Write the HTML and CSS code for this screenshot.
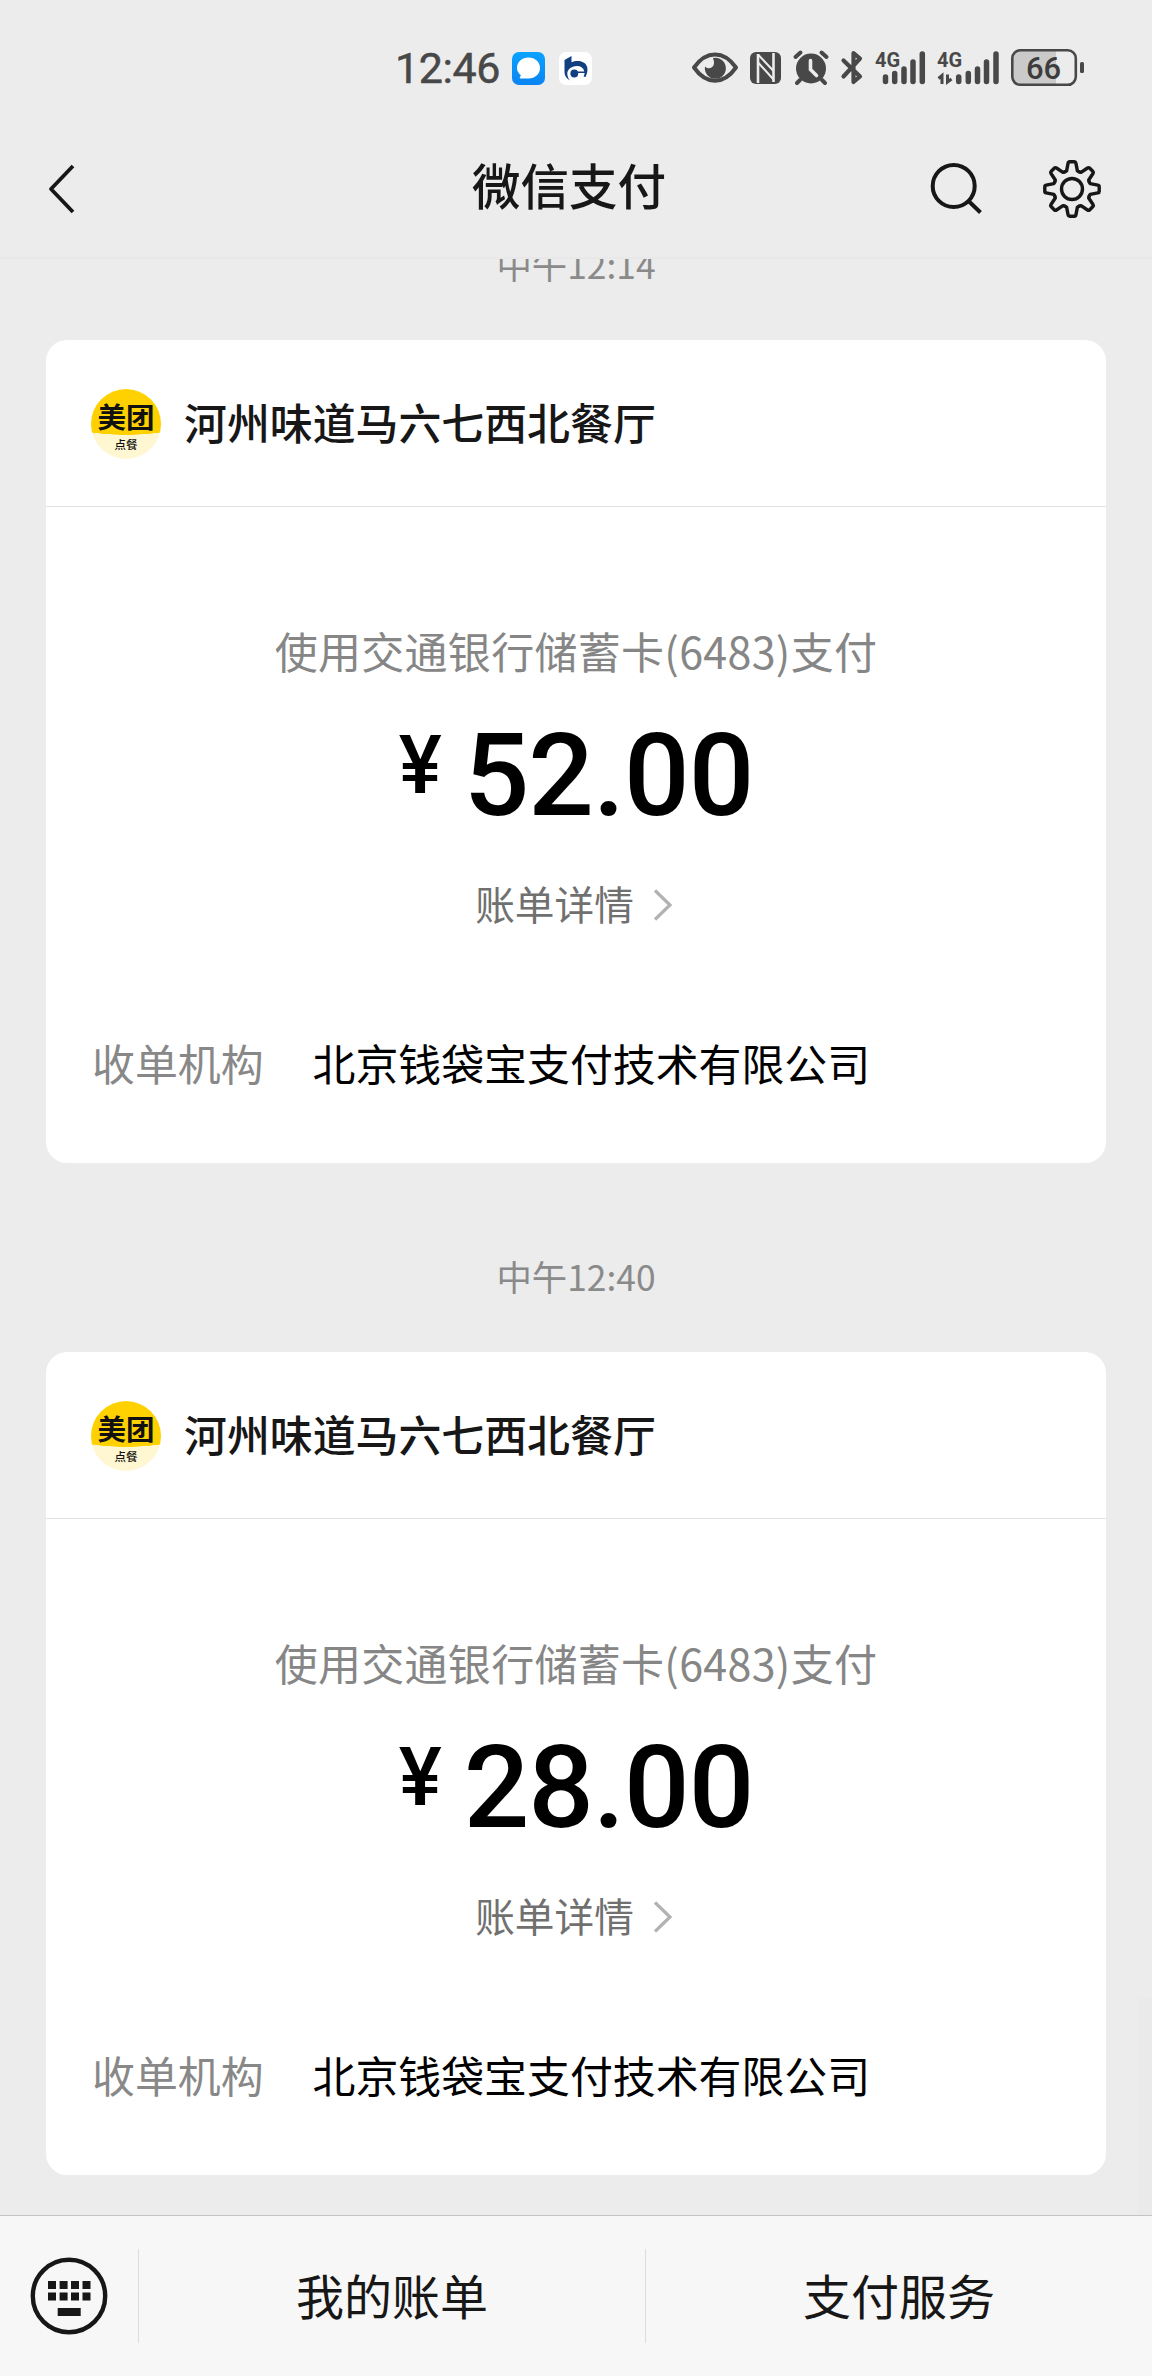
FILE: index.html
```html
<!DOCTYPE html>
<html lang="zh-CN">
<head>
<meta charset="utf-8">
<title>微信支付</title>
<link rel="stylesheet" href="styles.css">
</head>
<body>
<div class="screen">
  <div class="status-bar">
    <span class="clock">12:46</span>
    <svg class="app-icon" width="33" height="33" viewBox="0 0 33 33">
      <defs><linearGradient id="msg" x1="0" y1="0" x2="0" y2="1"><stop offset="0" stop-color="#0aa2ff"/><stop offset="1" stop-color="#0b84f3"/></linearGradient></defs>
      <rect width="33" height="33" rx="7" fill="url(#msg)"/>
      <path d="M16.500 5.500C23 5.500 28 10 28 16s-5 10.500-11.500 10.500H8.500c-.8 0-1-.6-.6-1.200l1-2C6.500 21.500 5 19 5 16 5 10 10 5.500 16.500 5.500z" fill="#fff"/>
    </svg>
    <svg class="app-icon" width="33" height="33" viewBox="0 0 33 33">
      <rect width="33" height="33" rx="7" fill="#fff"/>
      <path d="M5.500 8L12.500 4v6.200C16 8.500 22 8.200 25.500 11c3.800 3 3.800 8.500 1 14l-2-.5c.7-1.200 1-2 1.100-3.500H17v-1.600h8.300C24.500 16 22 14 18 14c-6 0-10 4-9.700 8 .2 2.500 1 4.500 2.700 6.500-3.800-2-5.500-5-5.500-8.500z" fill="#123f80"/>
      <circle cx="15.300" cy="21.500" r="3.900" fill="#123f80"/>
    </svg>
    <svg class="system-icons" width="396" height="40" viewBox="690 48 396 40">
      <path d="M694 67.500C700 59 707 54.500 715 54.500S730 59 736 67.500C730 76 723 80.700 715 80.700S700 76 694 67.500z" fill="none" stroke="#484848" stroke-width="4" stroke-linejoin="round"/>
      <path d="M713 58a10.500 10.500 0 1 1-8 8.500c3 3.500 8.500 1.500 9-3 .1-2-.3-3.500-1-5.500z" fill="#484848"/>
      <rect x="750" y="52" width="31" height="32" rx="6" fill="#484848"/>
      <path d="M758 54v29M773.500 53v29" stroke="#ececec" stroke-width="2.600" fill="none"/>
      <path d="M758 54.500L773.500 71M758.500 63l15 16.500" stroke="#ececec" stroke-width="2"/>
      <path d="M795.500 57l5-4.500M826.500 57l-5-4.500M800 80l-3 3M822 80l3 3" stroke="#484848" stroke-width="4" stroke-linecap="round"/>
      <circle cx="811" cy="68.500" r="15" fill="#484848"/>
      <path d="M810.500 60.500v9l6 6" fill="none" stroke="#ececec" stroke-width="3.600" stroke-linecap="round"/>
      <path d="M843.500 60.500L860 76.500 853.500 82V53l6.500 5.500L843.500 76.500" fill="none" stroke="#484848" stroke-width="4.200" stroke-linejoin="round" stroke-linecap="round"/>
      <g class="net-label"><text x="875" y="67">4G</text><text x="937" y="67">4G</text></g>
      <g stroke="#484848" stroke-width="5.500" stroke-linecap="round">
        <path d="M885.500 77v4.500M894.700 73.500v8M904 69v12.500M913 62v19.500M922.300 54v27.500"/>
        <path d="M958.700 77v4.500M968.300 73.500v8M977.500 69v12.500M986.500 62v19.500M996 54v27.500"/>
      </g>
      <path d="M938.500 78.500l3.500-3V84M947.500 74.500V82l4-3" fill="none" stroke="#484848" stroke-width="3"/>
      <path d="M1019 51h37v33h-37a6 6 0 0 1-6-6V57a6 6 0 0 1 6-6z" fill="#cacaca"/>
      <rect x="1012.300" y="50.300" width="63.500" height="34.500" rx="8" fill="none" stroke="#484848" stroke-width="2.600"/>
      <rect x="1080" y="62" width="4" height="11" rx="1.500" fill="#484848"/>
      <text x="1043.500" y="79" class="battery-level">66</text>
    </svg>
  </div>

  <header class="nav">
    <svg width="60" height="60" viewBox="0 0 60 60"><path d="M43 7L21 30l22 23" fill="none" stroke="#171717" stroke-width="3.800" stroke-linejoin="round"/></svg>
    <h1 class="nav-title">微信支付</h1>
    <div class="nav-actions">
      <svg width="60" height="60" viewBox="0 0 60 60" fill="none" stroke="#171717" stroke-width="4"><circle cx="27.700" cy="27" r="21"/><path d="M42.500 42L54.500 53.500"/></svg>
      <svg width="60" height="60" viewBox="-30 -30 60 60" fill="none" stroke="#171717" stroke-width="3.400" stroke-linejoin="round" stroke-linecap="round">
        <defs><path id="tooth" d="M-7.100-17.200L-5.400-18.200-3.900-25.800Q-3.600-27.200-2.400-27.200H2.400Q3.600-27.200 3.900-25.800L5.400-18.200 7.100-17.200"/></defs>
        <use href="#tooth"/><use href="#tooth" transform="rotate(45)"/><use href="#tooth" transform="rotate(90)"/><use href="#tooth" transform="rotate(135)"/><use href="#tooth" transform="rotate(180)"/><use href="#tooth" transform="rotate(225)"/><use href="#tooth" transform="rotate(270)"/><use href="#tooth" transform="rotate(315)"/>
        <circle r="10.500"/>
      </svg>
    </div>
  </header>

  <main class="messages">
    <time class="stamp">中午12:14</time>
    <article class="card">
      <div class="merchant">
        <div class="avatar"><span class="avatar-brand">美团</span><span class="avatar-sub">点餐</span></div>
        <h2 class="merchant-name">河州味道马六七西北餐厅</h2>
      </div>
      <div class="payment">
        <p class="method">使用交通银行储蓄卡(6483)支付</p>
        <p class="amount"><span class="currency">¥</span><span class="value">52.00</span></p>
        <a class="detail">账单详情<svg width="22" height="36" viewBox="0 0 22 36"><path d="M3 3.500L18 18 3 32.500" fill="none" stroke="#b2b2b2" stroke-width="3.200"/></svg></a>
        <dl class="acquirer"><dt>收单机构</dt><dd>北京钱袋宝支付技术有限公司</dd></dl>
      </div>
    </article>
    <time class="stamp">中午12:40</time>
    <article class="card">
      <div class="merchant">
        <div class="avatar"><span class="avatar-brand">美团</span><span class="avatar-sub">点餐</span></div>
        <h2 class="merchant-name">河州味道马六七西北餐厅</h2>
      </div>
      <div class="payment">
        <p class="method">使用交通银行储蓄卡(6483)支付</p>
        <p class="amount"><span class="currency">¥</span><span class="value">28.00</span></p>
        <a class="detail">账单详情<svg width="22" height="36" viewBox="0 0 22 36"><path d="M3 3.500L18 18 3 32.500" fill="none" stroke="#b2b2b2" stroke-width="3.200"/></svg></a>
        <dl class="acquirer"><dt>收单机构</dt><dd>北京钱袋宝支付技术有限公司</dd></dl>
      </div>
    </article>
    <div class="scroll-track"></div>
  </main>

  <footer class="menu">
    <div class="menu-keyboard">
      <svg width="78" height="78" viewBox="0 0 78 78"><circle cx="39" cy="39" r="36.200" fill="none" stroke="#171717" stroke-width="4.400"/>
      <path fill="#171717" d="M18 24h8v8h-8zM29.600 24h8v8h-8zM41 24h8v8h-8zM52.500 24h8v8h-8zM18 35.500h8v8h-8zM29.600 35.500h8v8h-8zM41 35.500h8v8h-8zM52.500 35.500h8v8h-8zM27.700 51h23v8h-23z"/></svg>
    </div>
    <div class="menu-item">我的账单</div>
    <div class="menu-item">支付服务</div>
  </footer>
</div>
</body>
</html>
```
FILE: styles.css
```css
* { box-sizing: border-box; margin: 0; padding: 0; }

body {
  font-family: "Noto Sans CJK SC", sans-serif;
  color: #171717;
  background: #ececec;
}

.screen {
  width: 1152px;
  height: 2376px;
  display: flex;
  flex-direction: column;
  overflow: hidden;
}

.status-bar {
  flex: none;
  height: 122px;
  padding: 48px 66px 0 395px;
  display: flex;
  align-items: flex-start;
}
.clock {
  width: 117px;
  margin-top: -5px;
  font: 400 43px/50px Roboto, sans-serif;
  letter-spacing: -0.4px;
  color: #484848;
  -webkit-text-stroke: 0.5px #484848;
}
.app-icon { margin: 4px 14px 0 0; }
.system-icons { margin-left: auto; }
.net-label {
  font: 700 20px Roboto, sans-serif;
  fill: #484848;
}
.battery-level {
  font: 500 31px Roboto, sans-serif;
  fill: #3c3c3c;
  text-anchor: middle;
}

.nav {
  flex: none;
  height: 137px;
  padding: 0 50px 1px 30px;
  display: flex;
  align-items: center;
  justify-content: space-between;
  border-bottom: 2px solid #e8e8e8;
}
.nav-title {
  font-size: 48.5px;
  line-height: 60px;
  font-weight: 500;
  margin: -11px 0 0 122px;
}
.nav-actions { display: flex; gap: 56px; }

.messages {
  position: relative;
  flex: 1;
  min-height: 0;
  padding: 0 46px 40px;
  display: flex;
  flex-direction: column;
  justify-content: flex-end;
  overflow: hidden;
}
.stamp {
  flex: none;
  height: 189px;
  padding-top: 35px;
  display: flex;
  align-items: center;
  justify-content: center;
  font-size: 35.4px;
  color: #8a8a8a;
}

.card {
  flex: none;
  height: 823px;
  border-radius: 21px;
  background: #fff;
}
.merchant {
  height: 167px;
  padding: 0 45px;
  display: flex;
  align-items: center;
  gap: 23px;
  border-bottom: 1px solid #e2e2e2;
}
.merchant-name {
  font-size: 42.9px;
  line-height: 60px;
  font-weight: 500;
  margin-top: -5px;
}
.avatar {
  width: 70px;
  height: 70px;
  margin-top: 2px;
  border-radius: 50%;
  display: flex;
  flex-direction: column;
  align-items: center;
  background: radial-gradient(ellipse 110px 46px at 50% 0, #ffd100 99%, #fff6d2 100%);
  color: #111;
}
.avatar-brand {
  font-size: 28.5px;
  line-height: 34px;
  font-weight: 700;
  margin-top: 10px;
}
.avatar-sub {
  font-size: 11.5px;
  line-height: 14px;
  font-weight: 500;
  margin-top: 4px;
}

.payment {
  padding: 113px 46px 0;
  display: flex;
  flex-direction: column;
  align-items: center;
}
.method {
  font-size: 43px;
  line-height: 60px;
  letter-spacing: 0.3px;
  color: #868686;
}
.amount {
  height: 114px;
  margin-top: 36px;
  display: flex;
  align-items: flex-start;
  gap: 22px;
  color: #000;
  font-family: Roboto, sans-serif;
  font-weight: 500;
}
.currency { font-size: 81px; line-height: 100px; }
.value {
  font-size: 115.5px;
  line-height: 120px;
  letter-spacing: -1px;
}
.detail {
  margin: 43px 3px 0 0;
  display: flex;
  align-items: center;
  gap: 18px;
  font-size: 39.7px;
  line-height: 60px;
  color: #707070;
}
.detail svg { margin-top: 3px; }
.acquirer {
  align-self: stretch;
  margin-top: 99px;
  display: flex;
  gap: 49px;
  font-size: 42.9px;
  line-height: 60px;
}
.acquirer dt { color: #888; }
.acquirer dd { color: #000; }

.scroll-track {
  position: absolute;
  right: 0;
  bottom: 0;
  width: 13px;
  height: 217px;
  background: #eaeaea;
}

.menu {
  flex: none;
  height: 161px;
  display: grid;
  grid-template-columns: 138px 1fr 1fr;
  align-items: center;
  border-top: 1px solid #c4c4c4;
  background: #f7f7f7;
}
.menu-keyboard {
  padding-left: 30px;
  display: flex;
}
.menu-item {
  height: 94px;
  padding-bottom: 5px;
  border-left: 1px solid #dcdcdc;
  display: flex;
  align-items: center;
  justify-content: center;
  font-size: 48px;
  line-height: 60px;
}
```
